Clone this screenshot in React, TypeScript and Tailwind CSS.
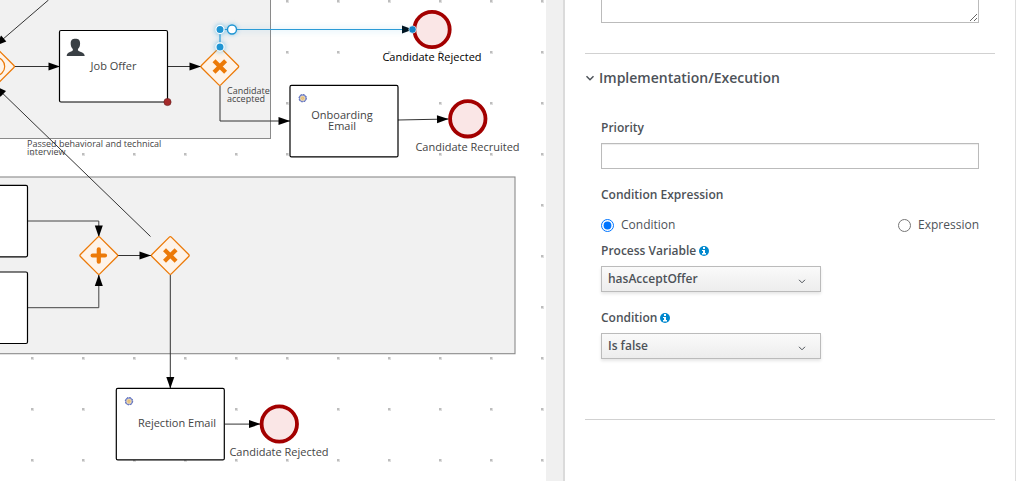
import { useId, useState } from "react";
import type { ReactNode } from "react";

type Point = [number, number];

const GATEWAY_MARK = {
  exclusive: "M-4.3 -4.3L4.3 4.3M4.3 -4.3L-4.3 4.3",
  parallel: "M-6.2 0H6.2M0 -6.2V6.2",
};

function Flow({ points, tone = "#333" }: { points: Point[]; tone?: string }) {
  const [px, py] = points[points.length - 2];
  const [x, y] = points[points.length - 1];
  const angle = (Math.atan2(y - py, x - px) * 180) / Math.PI;
  return (
    <g>
      <polyline points={points.map((p) => p.join(",")).join(" ")} fill="none" stroke={tone} strokeWidth="1" />
      <path d="M0 0L-11.5 -4V4Z" transform={`translate(${x} ${y}) rotate(${angle})`} fill="#000" />
    </g>
  );
}

function TaskBox({ x, y, children }: { x: number; y: number; children?: ReactNode }) {
  return (
    <g transform={`translate(${x} ${y})`}>
      <rect width="108" height="71.5" rx="1.5" fill="#fff" stroke="#000" strokeWidth="1.2" />
      {children}
    </g>
  );
}

function Gateway({ x, y, kind }: { x: number; y: number; kind?: keyof typeof GATEWAY_MARK }) {
  return (
    <g transform={`translate(${x} ${y})`}>
      <path d="M-18.4 -1L-1 -18.4Q0 -19.4 1 -18.4L18.4 -1Q19.4 0 18.4 1L1 18.4Q0 19.4 -1 18.4L-18.4 1Q-19.4 0 -18.4 -1Z" fill="#fef3e8" stroke="#ec7a08" strokeWidth="1.3" />
      {kind ? (
        <path d={GATEWAY_MARK[kind]} fill="none" stroke="#ec7a08" strokeWidth="4.2" strokeLinecap={kind === "parallel" ? "round" : "square"} />
      ) : (
        <circle r="9.2" fill="none" stroke="#ec7a08" strokeWidth="1.2" />
      )}
    </g>
  );
}

function EndEvent({ x, y }: { x: number; y: number }) {
  return <circle cx={x} cy={y} r="17.7" fill="#fae6e6" stroke="#a30000" strokeWidth="3.8" />;
}

function ServiceGear() {
  return (
    <g transform="translate(12.7 12.8)">
      <circle r="3.2" fill="#f5dca6" stroke="#8b98d4" strokeWidth="1.3" />
      <circle r="3.7" fill="none" stroke="#4f61b0" strokeWidth="1" strokeDasharray="1.45 1.45" />
      <circle r="1.2" fill="#f3cf80" stroke="#cfa878" strokeWidth="0.6" />
    </g>
  );
}

function ProcessDiagram() {
  return (
    <svg className="absolute inset-0 h-full w-full font-['Open_Sans',sans-serif]" role="img" aria-label="Hiring process diagram">
      <defs>
        <pattern id="grid-dots" x="31" y="0" width="51" height="51" patternUnits="userSpaceOnUse">
          <rect width="3" height="3" y="0" x="0" fill="#dedede" />
          <rect width="2" height="2" x="0" y="0" fill="#bdbdbd" />
        </pattern>
        <filter id="glow" x="-100%" y="-100%" width="300%" height="300%">
          <feGaussianBlur stdDeviation="2.5" />
        </filter>
        <filter id="line-glow" filterUnits="userSpaceOnUse" x="205" y="15" width="220" height="45">
          <feGaussianBlur stdDeviation="3" />
        </filter>
      </defs>
      <rect width="100%" height="100%" fill="url(#grid-dots)" />

      <rect x="-10" y="-10" width="280.5" height="148.5" fill="#f1f1f1" stroke="#8a8a8a" />
      <rect x="-10" y="177" width="525" height="176.7" fill="#f1f1f1" stroke="#8a8a8a" strokeWidth="1.1" />

      <Flow points={[[48.5, 0], [-5, 46]]} />
      <Flow points={[[150.5, 236.5], [-5, 86]]} />
      <Flow points={[[15, 66.5], [60, 66.5]]} />
      <Flow points={[[168, 66.5], [201, 66.5]]} />
      <Flow points={[[220, 86], [220, 121], [290, 121]]} />
      <Flow points={[[398, 120], [448.5, 119]]} />
      <Flow points={[[28, 221], [98.8, 221], [98.8, 237]]} tone="#444" />
      <Flow points={[[28, 307.7], [98.8, 307.7], [98.8, 274.5]]} tone="#444" />
      <Flow points={[[118, 255.5], [151, 255.5]]} />
      <Flow points={[[170.3, 275], [170.3, 388.5]]} />
      <Flow points={[[225, 424.1], [260.5, 424.1]]} />

      <Gateway x={-4.5} y={66.5} />
      <TaskBox x={59.5} y={30.5}>
        <path d="M7.2 25.5C7.5 22.3 10 21.8 12.3 20.8Q14 20 13.3 18.6C11.7 17 11.2 15.2 11.2 13C11.2 9.5 12.8 8.2 15.9 8.2S20.6 9.5 20.6 13C20.6 15.2 20.1 17 18.5 18.6Q17.8 20 19.5 20.8C21.8 21.8 24.9 22.3 25.2 25.5Z" fill="#393f44" />
      </TaskBox>
      <circle cx="167.5" cy="102" r="3.6" fill="#a52a2a" stroke="#6e2424" strokeWidth="0.7" />
      <Gateway x={219.8} y={66.5} kind="exclusive" />
      <TaskBox x={290} y={85.4}><ServiceGear /></TaskBox>
      <EndEvent x={432} y={29.5} />
      <EndEvent x={467.8} y={118.8} />

      <TaskBox x={-80.5} y={185.3} />
      <TaskBox x={-80.5} y={272} />
      <Gateway x={98.8} y={255.5} kind="parallel" />
      <Gateway x={170.3} y={255.5} kind="exclusive" />
      <TaskBox x={116.3} y={388.4}><ServiceGear /></TaskBox>
      <EndEvent x={279.3} y={424} />

      <g>
        <path d="M220 47V29.5H408" fill="none" stroke="#39a5dc" strokeWidth="2" opacity="0.3" filter="url(#line-glow)" />
        <g fill="#39a5dc" opacity="0.6" filter="url(#glow)">
          <circle cx="220" cy="29.5" r="5" />
          <circle cx="220" cy="47" r="5" />
          <circle cx="232" cy="29.5" r="5" />
        </g>
        <path d="M220 47V29.5H412" fill="none" stroke="#2b9bd6" strokeWidth="1.2" />
        <path d="M402 25.5L413 29.5L402 33.5Z" fill="#001522" />
        <g fill="#1f95d3" stroke="#fff" strokeWidth="1.2">
          <circle cx="220" cy="29.5" r="4.1" />
          <circle cx="220" cy="47" r="4.1" />
        </g>
        <circle cx="412.5" cy="29.5" r="3.7" fill="#1585c8" stroke="#fff" strokeWidth="0.6" />
        <circle cx="232" cy="29.5" r="4.5" fill="#fff" stroke="#1f95d3" strokeWidth="1.4" />
      </g>

      <g fill="#444" fontSize="11" textAnchor="middle">
        <text x="113.5" y="70">Job Offer</text>
        <text x="342" y="119">Onboarding</text>
        <text x="342" y="130">Email</text>
        <text x="177" y="427">Rejection Email</text>
        <text x="432" y="61" fill="#000">Candidate Rejected</text>
        <text x="467.5" y="151">Candidate Recruited</text>
        <text x="279" y="456">Candidate Rejected</text>
      </g>
      <g fill="#444" fontSize="9">
        <text x="227" y="94">Candidate</text>
        <text x="227" y="102">accepted</text>
        <text x="27" y="147">Passed behavioral and technical</text>
        <text x="27" y="155">interview</text>
      </g>
    </svg>
  );
}

function InfoIcon() {
  return (
    <svg className="mb-px size-[10px]" viewBox="0 0 10 10" aria-hidden="true">
      <circle cx="5" cy="5" r="5" fill="#0088ce" />
      <path d="M4 1H6V3H4ZM3 4H6V7H7V8.5H3V7H4V5H3Z" fill="#fff" />
    </svg>
  );
}

function Dropdown({ label, options }: { label: string; options: string[] }) {
  const id = useId();
  return (
    <div>
      <div className="flex h-4 items-center gap-[3px]">
        <label htmlFor={id} className="font-semibold">{label}</label>
        <InfoIcon />
      </div>
      <div className="relative mt-[7px] w-[220px]">
        <select id={id} className="block h-[26px] w-full appearance-none border border-[#bbb] bg-linear-to-b from-[#fafafa] to-[#ededed] pr-6 pl-1.5 font-semibold shadow-[0_2px_3px_rgba(3,3,3,0.1)]">
          {options.map((option) => <option key={option}>{option}</option>)}
        </select>
        <svg className="pointer-events-none absolute right-[15px] bottom-2 h-[5px] w-2" viewBox="0 0 8 5" aria-hidden="true">
          <path d="M1 0.8L4 3.8L7 0.8" fill="none" stroke="#4d5258" strokeWidth="1" />
        </svg>
      </div>
    </div>
  );
}

export default function App() {
  const [mode, setMode] = useState("Condition");
  return (
    <div className="flex min-h-screen bg-white font-['Open_Sans',sans-serif] text-xs leading-4 text-[#4d5258]">
      <main className="relative min-w-0 flex-1 overflow-hidden">
        <ProcessDiagram />
      </main>
      <div className="w-[17px] shrink-0 bg-[#f0f0f0]" />
      <aside className="mr-[15px] w-[453px] shrink-0 border-r border-l-2 border-r-[#ddd] border-l-[#dbdbdb] pr-5 pl-5">
        <div className="border-b border-[#d1d1d1] px-4 pb-[30px]">
          <textarea aria-label="Documentation" rows={1} className="block h-[23px] w-full resize overflow-hidden border border-t-0 border-[#bbb]" />
        </div>
        <section className="border-b border-[#d1d1d1] pt-3 pb-[60px]">
          <h2>
            <button type="button" aria-expanded="true" className="flex h-6 items-center gap-1 text-sm font-semibold">
              <svg className="h-[10px] w-[10px]" viewBox="0 0 10 10" aria-hidden="true">
                <path d="M1.5 3.2L5 6.7L8.5 3.2" fill="none" stroke="#4d5258" strokeWidth="1.5" />
              </svg>
              Implementation/Execution
            </button>
          </h2>
          <div className="px-4 pt-[30px]">
            <label htmlFor="priority" className="block font-semibold">Priority</label>
            <input id="priority" type="text" className="mt-[7px] block h-[26px] w-full border border-[#bbb] px-1.5 shadow-[inset_0_1px_1px_rgba(3,3,3,0.075)]" />
            <fieldset>
              <legend className="pt-[18px] font-semibold">Condition Expression</legend>
              <div className="mt-[14px] flex justify-between">
                {["Condition", "Expression"].map((name) => (
                  <label key={name} className="flex items-center gap-[7px]">
                    <input type="radio" name="mode" checked={mode === name} onChange={() => setMode(name)} className="size-[13px]" />
                    {name}
                  </label>
                ))}
              </div>
            </fieldset>
            <div className="mt-[10px] flex flex-col gap-[18px]">
              <Dropdown label="Process Variable" options={["hasAcceptOffer"]} />
              <Dropdown label="Condition" options={["Is false", "Is true"]} />
            </div>
          </div>
        </section>
      </aside>
    </div>
  );
}
